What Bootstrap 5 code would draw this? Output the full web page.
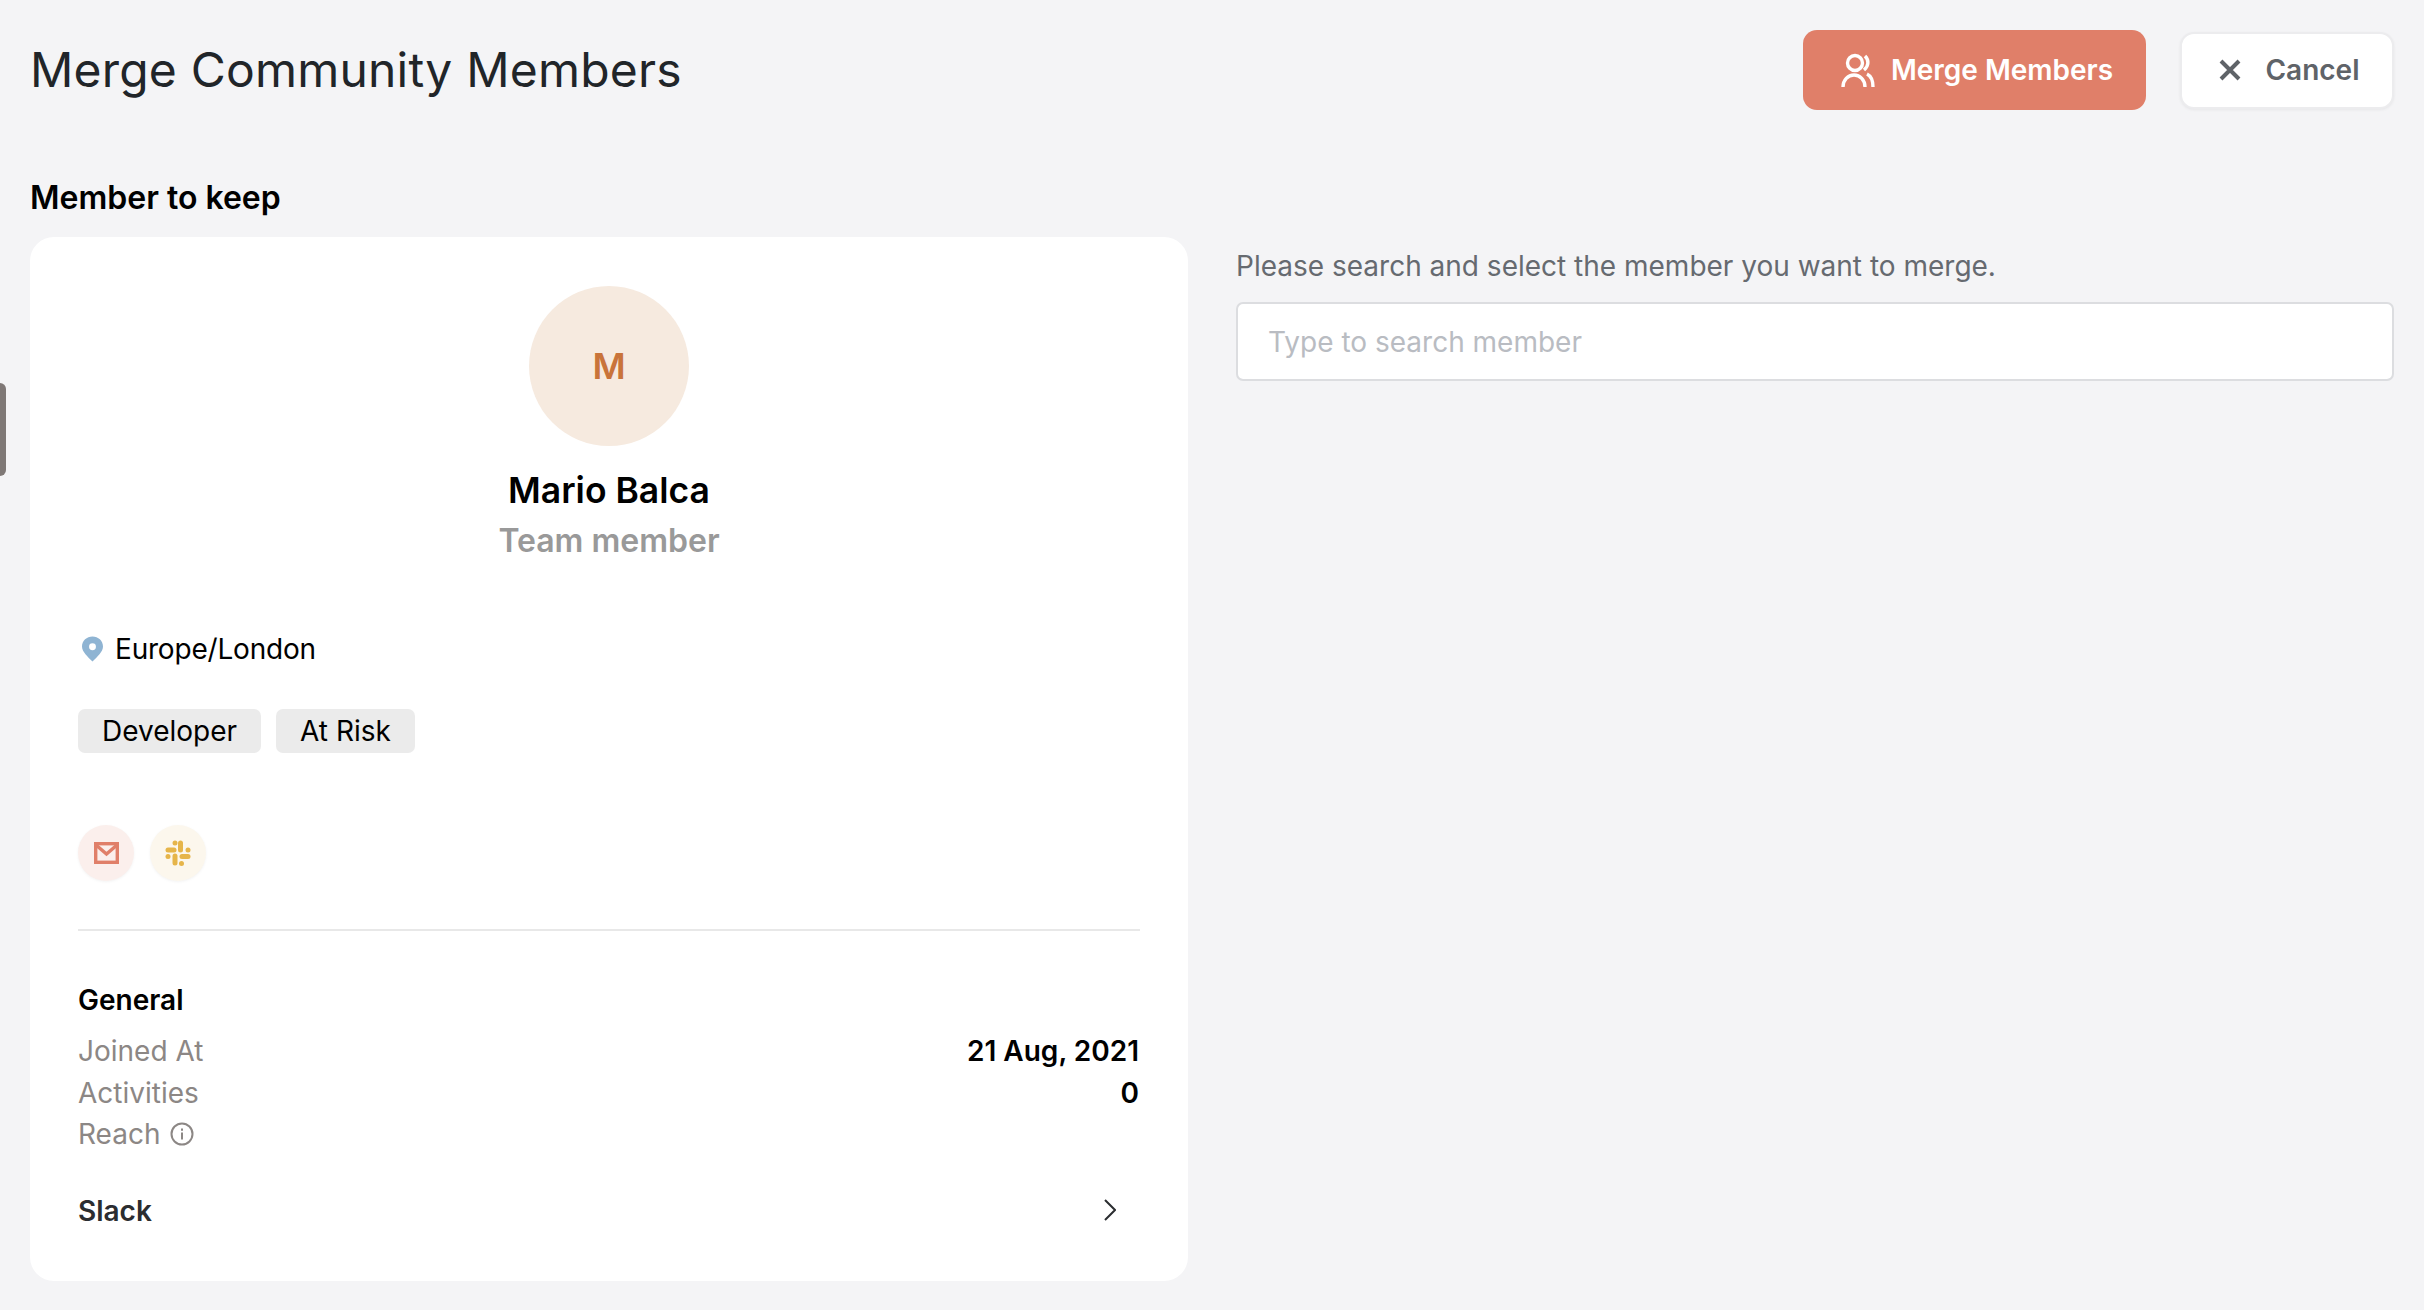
<!DOCTYPE html>
<html lang="en">
<head>
  <meta charset="UTF-8">
  <meta name="viewport" content="width=device-width, initial-scale=1.0">
  <link href="https://cdn.jsdelivr.net/npm/bootstrap@5.3.0/dist/css/bootstrap.min.css" rel="stylesheet">
  <style>
    body {
      font-family: Inter, "Liberation Sans", sans-serif;
      background: #f4f4f6;
      color: #000;
      height: 1310px;
      overflow: hidden;
      padding: 30px;
      position: relative;
    }
    .side-handle {
      position: absolute;
      left: 0;
      top: 383px;
      width: 6px;
      height: 93px;
      background: #7f7876;
      border-radius: 0 9px 9px 0;
    }
    .page-head { height: 80px; }
    .page-title { font-size: 48px; font-weight: 400; letter-spacing: .2px; color: #212529; margin: 0; }
    .btn-merge {
      width: 343px;
      height: 80px;
      background: #e07f69;
      color: #fff;
      border: 0;
      border-radius: 14px;
      font-size: 28px;
      font-weight: 600;
      padding: 0 0 0 5px;
    }
    .btn-quit {
      width: 214px;
      height: 77px;
      background: #fff;
      color: #5f6368;
      border: 2px solid #ececee;
      border-radius: 14px;
      font-size: 28px;
      font-weight: 600;
      padding: 0 0 0 5px;
      box-shadow: 0 1px 3px rgba(0,0,0,.06);
    }
    .keep-label { font-size: 32px; font-weight: 600; line-height: 40px; margin: 68px 0 19px; }
    .keep-card {
      height: 1044px;
      background: #fff;
      border-radius: 24px;
      padding: 49px 48px 48px;
    }
    .avatar-big {
      width: 160px;
      height: 160px;
      background: #f6eadf;
      color: #c9743a;
      font-size: 36px;
      font-weight: 600;
    }
    .member-name { font-size: 35.500px; font-weight: 600; line-height: 44px; margin-top: 23px; }
    .member-role { font-size: 32px; font-weight: 600; line-height: 40px; color: #999; margin-top: 8px; }
    .info-text { font-size: 28px; line-height: 36px; letter-spacing: -.2px; }
    .location-row { margin-top: 70px; }
    .tag-row { margin-top: 42px; gap: 15px; }
    .tag-chip {
      background: #ebebeb;
      border-radius: 7px;
      height: 44px;
      line-height: 44px;
      padding: 0 24px;
      font-size: 28px;
    }
    .source-row { margin-top: 72px; gap: 16px; }
    .source-dot {
      width: 56px;
      height: 56px;
      box-shadow: 0 1px 3px rgba(0,0,0,.05);
    }
    .dot-mail { background: #fbefec; }
    .dot-slack { background: #fcf7ed; }
    .card-rule { border-top: 2px solid #e8e8e8; margin: 48px 0 0; opacity: 1; }
    .group-head { font-size: 28px; font-weight: 600; line-height: 36px; margin-top: 51px; margin-bottom: 12px; }
    .stat-row { height: 41.700px; font-size: 28px; line-height: 42px; }
    .stat-label { color: #8c8785; }
    .stat-value { font-weight: 600; padding-right: 1px; }
    .slack-row { margin-top: 38px; color: #2b2d30; }
    .slack-arrow { margin-bottom: 2px; }
    .reach-icon { margin-left: 2px; }
    .search-hint { font-size: 28px; line-height: 36px; color: #666a70; margin: 0 0 18px; padding-top: 11px; }
    .search-box.form-control {
      height: 79px;
      font-size: 28px;
      padding: 0 30px;
      border: 2px solid #dcdde0;
      border-radius: 7px;
    }
    .search-box.form-control::placeholder { color: #b9bcc2; }
    .col-gap { gap: 48px; }
    .col-half { width: 1158px; }
  </style>
  <title>Merge Community Members</title>
</head>
<body>
  <div class="side-handle"></div>

  <div class="page-head d-flex justify-content-between align-items-center">
    <h1 class="page-title">Merge Community Members</h1>
    <div class="d-flex align-items-center" style="gap:34px">
      <button class="btn btn-merge d-flex align-items-center justify-content-center gap-3">
        <svg width="34" height="34" viewBox="0 0 34 34" fill="none" stroke="#fff" stroke-width="3.400">
          <circle cx="14" cy="10" r="7.500"/>
          <path d="M2 34c0-7 5-12 11-12s11 5 11 12"/>
          <path d="M24 3c4 4 4 10-1 14"/>
          <path d="M26 21c4 2 6 7 6 13"/>
        </svg>
        Merge Members
      </button>
      <button class="btn btn-quit d-flex align-items-center justify-content-center gap-4">
        <svg width="22" height="22" viewBox="0 0 22 22" fill="none" stroke="#5f6368" stroke-width="4">
          <path d="M2 2l18 18M20 2L2 20"/>
        </svg>
        Cancel
      </button>
    </div>
  </div>

  <div class="keep-label">Member to keep</div>

  <div class="d-flex col-gap">
    <div class="keep-card col-half">
      <div class="text-center">
        <div class="avatar-big rounded-circle d-flex align-items-center justify-content-center mx-auto">M</div>
        <div class="member-name">Mario Balca</div>
        <div class="member-role">Team member</div>
      </div>

      <div class="location-row info-text d-flex align-items-center">
        <svg class="ms-1" style="margin-right:12px" width="21" height="26" viewBox="0 0 22 26">
          <path fill="#8fb4d3" fill-rule="evenodd" d="M11 0c6 0 11 4.500 11 10.500 0 5.500-6 11-11 15.500C6 21.500 0 16 0 10.500 0 4.500 5 0 11 0zm0 7a3.600 3.600 0 1 0 0 7.200A3.600 3.600 0 0 0 11 7z"/>
        </svg>
        <span>Europe/London</span>
      </div>

      <div class="tag-row d-flex">
        <span class="tag-chip">Developer</span>
        <span class="tag-chip">At Risk</span>
      </div>

      <div class="source-row d-flex">
        <div class="source-dot dot-mail rounded-circle d-flex align-items-center justify-content-center">
          <svg width="25" height="22" viewBox="0 0 25 22" fill="none" stroke="#e07f69" stroke-width="3.400">
            <rect x="1.700" y="1.700" width="21.600" height="18.600"/>
            <path d="M2 3l10.500 9L23 3"/>
          </svg>
        </div>
        <div class="source-dot dot-slack rounded-circle d-flex align-items-center justify-content-center">
          <svg width="26" height="26" viewBox="0 0 26 26" fill="none" stroke="#e6b54a" stroke-width="5" stroke-linecap="round">
            <path d="M3 10h6"/>
            <path d="M10 3h0"/>
            <path d="M15.500 3v7"/>
            <path d="M23 10h0"/>
            <path d="M17 16.500h6"/>
            <path d="M16.500 23.500h0"/>
            <path d="M10 16v7"/>
            <path d="M3 16.500h0"/>
          </svg>
        </div>
      </div>

      <hr class="card-rule">

      <div class="group-head">General</div>
      <div class="stat-row d-flex justify-content-between">
        <span class="stat-label">Joined At</span>
        <span class="stat-value">21 Aug, 2021</span>
      </div>
      <div class="stat-row d-flex justify-content-between">
        <span class="stat-label">Activities</span>
        <span class="stat-value">0</span>
      </div>
      <div class="stat-row d-flex justify-content-between">
        <span class="stat-label d-flex align-items-center gap-2">Reach
          <svg class="reach-icon" width="24" height="24" viewBox="0 0 24 24" fill="none" stroke="#8c8785" stroke-width="2">
            <circle cx="12" cy="12" r="10.500"/>
            <path d="M12 10.500v7M12 6.500v2.200"/>
          </svg>
        </span>
      </div>

      <div class="slack-row group-head d-flex justify-content-between align-items-center">
        <span>Slack</span>
        <svg class="slack-arrow me-4" width="12" height="22" viewBox="0 0 12 22" fill="none" stroke="#2b2d30" stroke-width="2">
          <path d="M1 1l10 10L1 21"/>
        </svg>
      </div>
    </div>

    <div class="col-half">
      <p class="search-hint">Please search and select the member you want to merge.</p>
      <input class="form-control search-box" type="text" placeholder="Type to search member">
    </div>
  </div>

  <script src="https://cdn.jsdelivr.net/npm/bootstrap@5.3.0/dist/js/bootstrap.bundle.min.js"></script>
</body>
</html>
